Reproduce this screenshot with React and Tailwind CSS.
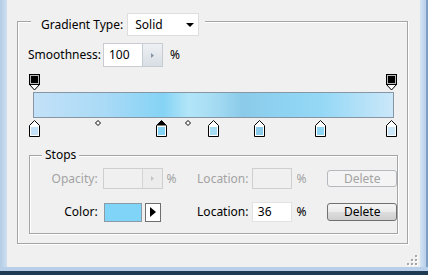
import React from 'react';

const BAR_STOPS = [
  { left: 0, color: '#c3e1f8' },
  { left: 127, color: '#85d3f5', selected: true },
  { left: 179, color: '#a6dcf3' },
  { left: 225, color: '#8bcbe9' },
  { left: 286, color: '#8fd6f5' },
  { left: 357, color: '#cbe7f9' },
];

const ColorStop = ({ color, selected }) => (
  <svg width="11" height="17" viewBox="0 0 11 17">
    <path d="M5.5 0.5 L10.5 5.5 L10.5 16.5 L0.5 16.5 L0.5 5.5 Z" fill="#fff" stroke="#000" />
    {selected && <path d="M5.5 0.5 L10.5 5.5 L0.5 5.5 Z" fill="#000" />}
    <rect x="2" y="7" width="7" height="8" fill={color} />
  </svg>
);

const OpacityStop = () => (
  <svg width="11" height="17" viewBox="0 0 11 17">
    <path d="M0.5 10.5 L5.5 16 L10.5 10.5 Z" fill="#fff" stroke="#000" />
    <rect x="0.5" y="0.5" width="10" height="10" fill="#b8b8b8" stroke="#000" />
    <rect x="2" y="2" width="7" height="7" fill="#000" />
  </svg>
);

const Diamond = () => (
  <svg width="6" height="6" viewBox="0 0 6 6">
    <path d="M3 0.5 L5.5 3 L3 5.5 L0.5 3 Z" fill="#fff" stroke="#000" />
  </svg>
);

const Spin = ({ disabled }) => (
  <div className={`w-[20px] h-full flex items-center justify-center border-l ${disabled ? 'border-[#d4d4d4] bg-[#ececec]' : 'border-[#c4ccd4] bg-gradient-to-b from-[#eef1f4] to-[#d8dee4]'}`}>
    <svg width="3" height="5" viewBox="0 0 3 5">
      <path d="M0 0 L3 2.5 L0 5 Z" fill={disabled ? '#c4c4c4' : '#8496a6'} />
    </svg>
  </div>
);

export default function App() {
  return (
    <div className="w-[428px] h-[275px] flex flex-col overflow-hidden font-['Noto_Sans',sans-serif] text-[12px] text-black">
      <div className="flex h-[267px]">
        <div className="w-[7px] bg-gradient-to-r from-[#b3cbe6] to-[#cfdff0]" />
        <div className="relative w-[413px] bg-[#f0f0f0] pl-[10px] pt-[21px]">
          {/* Gradient group */}
          <div className="w-[391px] h-[223px] border border-[#a5a5a5] shadow-[1px_1px_0_#fff,inset_1px_1px_0_#fff]">
            <div className="-mt-[9px] ml-[13px] w-fit flex items-center h-[23px] gap-[4px] bg-[#f0f0f0] pl-[10px] pr-[6px]">
              <span className="leading-none">Gradient Type:</span>
              <div className="w-[72px] h-[23px] bg-white border border-[#dedede] flex items-center pl-[7px] pr-[4px]">
                <span className="flex-1">Solid</span>
                <svg width="8" height="4" viewBox="0 0 8 4">
                  <path d="M0 0 L8 0 L4 4 Z" fill="#000" />
                </svg>
              </div>
            </div>

            <div className="mt-[7px] pl-[10px] h-[24px] flex items-center">
              <span className="w-[75px]">Smoothness:</span>
              <div className="w-[60px] h-[24px] flex border border-[#c8ccd2] bg-white">
                <span className="flex-1 flex items-center pl-[5px]">100</span>
                <Spin />
              </div>
              <span className="ml-[7px]">%</span>
            </div>

            {/* Gradient bar */}
            <div className="relative mt-[7px] ml-[11px] w-[369px] h-[63px] pt-[18px] px-[4px]">
              <div className="h-[26px] border border-[#8796a4] bg-[linear-gradient(to_right,#c3e1f8_0%,#a9daf6_20%,#85d3f5_36%,#b2e5f8_43%,#a6dcf3_50%,#8bcbe9_58%,#8fd3f2_70%,#94d8f6_80%,#cbe7f9_100%)]" />
              <div className="absolute left-0 top-0"><OpacityStop /></div>
              <div className="absolute left-[357px] top-0"><OpacityStop /></div>
              {BAR_STOPS.map((s) => (
                <div key={s.left} className="absolute top-[46px]" style={{ left: s.left }}>
                  <ColorStop color={s.color} selected={s.selected} />
                </div>
              ))}
              <div className="absolute left-[66px] top-[46px]"><Diamond /></div>
              <div className="absolute left-[156px] top-[46px]"><Diamond /></div>
            </div>

            {/* Stops group */}
            <div className="mt-[18px] ml-[11px] w-[369px] h-[79px] border border-[#a5a5a5] shadow-[1px_1px_0_#fff,inset_1px_1px_0_#fff]">
              <div className="-mt-[9px] ml-[12px] w-fit h-[16px] leading-[16px] px-[3px] bg-[#f0f0f0]">Stops</div>

              <div className="mt-[5px] h-[21px] flex items-center text-[#a3a3a3]">
                <span className="w-[68px] text-right">Opacity:</span>
                <div className="w-[100px] flex items-center pl-[5px]">
                  <div className="w-[60px] h-[21px] flex border border-[#cfcfcf] bg-[#f0f0f0]">
                    <span className="flex-1" />
                    <Spin disabled />
                  </div>
                  <span className="ml-[4px]">%</span>
                </div>
                <span className="w-[55px]">Location:</span>
                <div className="w-[40px] h-[21px] border border-[#cfcfcf] bg-[#f0f0f0]" />
                <span className="w-[36px] pl-[5px]">%</span>
                <div className="w-[70px] h-[17px] flex items-center justify-center rounded-[3px] border border-[#b5b9bd] bg-[#f4f4f4]">Delete</div>
              </div>

              <div className="mt-[13px] h-[20px] flex items-center">
                <span className="w-[68px] text-right">Color:</span>
                <div className="w-[100px] flex items-center pl-[6px]">
                  <div className="w-[38px] h-[19px] border border-[#8c9aa6] bg-[#80d4f7]" />
                  <div className="ml-[3px] w-[16px] h-[19px] border border-[#6f6f6f] bg-white flex items-center justify-center">
                    <svg width="6" height="10" viewBox="0 0 6 10">
                      <path d="M0 0 L6 5 L0 10 Z" fill="#000" />
                    </svg>
                  </div>
                </div>
                <span className="w-[55px]">Location:</span>
                <div className="w-[40px] h-[20px] border border-[#e2e2e2] bg-white flex items-center pl-[5px]">36</div>
                <span className="w-[36px] pl-[5px]">%</span>
                <div className="w-[70px] h-[18px] flex items-center justify-center rounded-[3px] border border-[#707070] bg-[linear-gradient(to_bottom,#f4f4f4_0%,#ebebeb_50%,#dddddd_51%,#cfcfcf_100%)]">Delete</div>
              </div>
            </div>
          </div>

          {/* resize grip */}
          <svg className="absolute right-[2px] bottom-[1px]" width="11" height="11" viewBox="0 0 11 11">
            {[[8, 0], [4, 4], [8, 4], [0, 8], [4, 8], [8, 8]].map(([x, y]) => (
              <g key={`${x}-${y}`}>
                <rect x={x + 1} y={y + 1} width="2" height="2" fill="#fff" />
                <rect x={x} y={y} width="2" height="2" fill="#a6a6a6" />
              </g>
            ))}
          </svg>
        </div>
        <div className="w-[8px] flex">
          <div className="w-[6px] bg-gradient-to-r from-[#d3e3f3] to-[#b9d0ea]" />
          <div className="w-[2px] bg-[#7d9fc4]" />
        </div>
      </div>
      <div className="h-[4px] bg-[#b7cfe9]" />
      <div className="h-[4px] bg-[#1f3b52]" />
    </div>
  );
}
